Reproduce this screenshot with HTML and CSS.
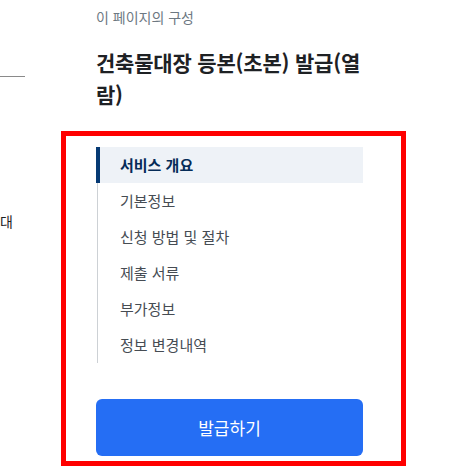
FILE: index.html
```html
<!DOCTYPE html>
<html lang="ko">
<head>
<meta charset="utf-8">
<title>건축물대장 등본(초본) 발급(열람)</title>
<link rel="stylesheet" href="styles.css">
</head>
<body>
<div class="page">
  <aside class="side">
    <div class="side-rule"></div>
    <div class="side-text">대</div>
  </aside>
  <main class="main">
    <p class="caption">이 페이지의 구성</p>
    <h1 class="title">건축물대장 등본(초본) 발급(열람)</h1>
    <section class="toc">
      <ul class="toc-list">
        <li class="toc-item is-active">서비스 개요</li>
        <li class="toc-item">기본정보</li>
        <li class="toc-item">신청 방법 및 절차</li>
        <li class="toc-item">제출 서류</li>
        <li class="toc-item">부가정보</li>
        <li class="toc-item">정보 변경내역</li>
      </ul>
      <button class="issue-btn" type="button">발급하기</button>
    </section>
  </main>
</div>
</body>
</html>
```
FILE: styles.css
```css
* { box-sizing: border-box; }
html, body { margin: 0; padding: 0; background: #fff; }
body {
  font-family: "Noto Sans CJK KR", "Noto Sans", sans-serif;
  color: #1e2124;
  width: 476px;
  height: 468px;
  overflow: hidden;
}
.page {
  display: flex;
  align-items: flex-start;
}
.side {
  width: 25px;
  flex: none;
  overflow: hidden;
}
.side-rule {
  height: 77px;
  border-bottom: 1px solid #8a8a8a;
}
.side-text {
  margin-top: 134px;
  font-size: 14px;
  line-height: 20px;
  color: #1e2124;
}
.main {
  margin-left: 71px;
  width: 267px;
  flex: none;
  padding-top: 7px;
}
.caption {
  margin: 0;
  font-size: 14px;
  line-height: 20px;
  color: #6d7882;
}
.title {
  margin: 19px 0 0;
  font-size: 21px;
  letter-spacing: -0.2px;
  line-height: 32px;
  font-weight: 700;
  color: #1e2124;
  word-break: break-all;
}
.toc {
  margin: 21px 0 0 -35px;
  width: 345px;
  border: 5px solid #ff0000;
  padding: 11px 38px 5px 30px;
}
.toc-list {
  list-style: none;
  margin: 0 0 0 1px;
  padding: 0;
  border-left: 1px solid #cdd1d5;
}
.toc-item {
  margin-left: -2px;
  border-left: 4px solid transparent;
  padding-left: 20px;
  height: 36px;
  line-height: 36px;
  font-size: 15px;
  color: #464c53;
}
.toc-item.is-active {
  border-left-color: #063a74;
  background: #eef2f7;
  font-weight: 700;
  color: #052b57;
}
.issue-btn {
  display: block;
  margin-top: 36px;
  width: 267px;
  height: 57px;
  border: 0;
  border-radius: 6px;
  background: #256ef4;
  color: #fff;
  font-family: inherit;
  font-size: 17px;
  font-weight: 400;
}
```
